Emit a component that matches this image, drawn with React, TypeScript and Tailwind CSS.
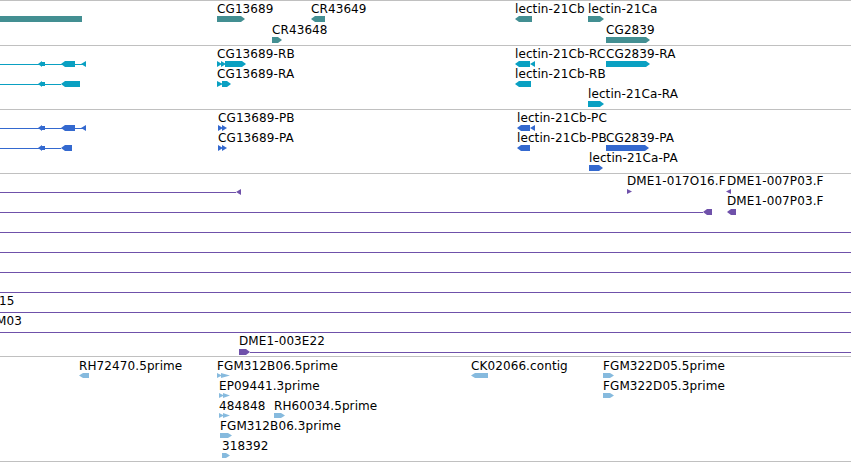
import React from 'react';

type Tip = 'l' | 'r' | 'none';

interface BarProps {
  x1: number;
  x2: number;
  y: number;
  h?: number;
  tip?: Tip;
}

// solid feature block, optionally pointed at one end
const Bar: React.FC<BarProps> = ({ x1, x2, y, h = 6, tip = 'none' }) => {
  const t = Math.min(4, x2 - x1);
  let pts = '';
  if (tip === 'r') pts = `${x1},${y} ${x2 - t},${y} ${x2},${y + h / 2} ${x2 - t},${y + h} ${x1},${y + h}`;
  else if (tip === 'l') pts = `${x1},${y + h / 2} ${x1 + t},${y} ${x2},${y} ${x2},${y + h} ${x1 + t},${y + h}`;
  else pts = `${x1},${y} ${x2},${y} ${x2},${y + h} ${x1},${y + h}`;
  return <polygon points={pts} />;
};

const Tri: React.FC<{ x1: number; x2: number; y: number; h?: number; dir: 'l' | 'r' }> = ({ x1, x2, y, h = 6, dir }) => {
  const pts =
    dir === 'l'
      ? `${x1},${y + h / 2} ${x2},${y} ${x2},${y + h}`
      : `${x1},${y} ${x2},${y + h / 2} ${x1},${y + h}`;
  return <polygon points={pts} />;
};

// arrowhead with a short thinner tail, sitting on an intron line
const Head: React.FC<{ x: number; y: number }> = ({ x, y }) => (
  <>
    <polygon points={`${x},${y + 3} ${x + 4},${y} ${x + 4},${y + 6}`} />
    <rect x={x + 4} y={y + 1} width={3} height={4} />
  </>
);

// two small right chevrons (UTR)
const Chev: React.FC<{ x: number; y: number; w?: number; h?: number }> = ({ x, y, w = 9, h = 6 }) => (
  <>
    <polygon points={`${x},${y} ${x + 5},${y + h / 2} ${x},${y + h}`} />
    <polygon points={`${x + 4},${y} ${x + w},${y + h / 2} ${x + 4},${y + h}`} />
  </>
);

const Line: React.FC<{ x1: number; x2: number; y: number }> = ({ x1, x2, y }) => (
  <rect x={x1} y={y} width={x2 - x1} height={1} />
);

const Label: React.FC<{ x: number; y: number; text: string }> = ({ x, y, text }) => (
  <span
    className="absolute whitespace-nowrap text-[12px] leading-[14px] tracking-[0.1px] text-black font-['DejaVu_Sans',sans-serif]"
    style={{ left: x, top: y }}
  >
    {text}
  </span>
);

// height includes the 1px separator at the bottom
const Track: React.FC<{ height: number; children: React.ReactNode }> = ({ height, children }) => (
  <div className="relative w-full shrink-0 overflow-hidden border-b border-[#c0c0c0]" style={{ height }}>
    {children}
  </div>
);

const GeneTrack = () => (
  <Track height={45}>
    <svg className="absolute inset-0" width={851} height={44}>
      <g className="fill-[#438f92]">
        <Bar x1={0} x2={82} y={15} />
        <Bar x1={217} x2={245} y={15} tip="r" />
        <Bar x1={311} x2={325} y={15} tip="l" />
        <Bar x1={515} x2={532} y={15} tip="l" />
        <Bar x1={588} x2={604} y={15} tip="r" />
        <Bar x1={272} x2={282} y={36} tip="r" />
        <Bar x1={606} x2={650} y={36} tip="r" />
      </g>
    </svg>
    <Label x={217} y={1} text="CG13689" />
    <Label x={311} y={1} text="CR43649" />
    <Label x={515} y={1} text="lectin-21Cb" />
    <Label x={588} y={1} text="lectin-21Ca" />
    <Label x={272} y={22} text="CR43648" />
    <Label x={606} y={22} text="CG2839" />
  </Track>
);

const TranscriptTrack = () => (
  <Track height={64}>
    <svg className="absolute inset-0" width={851} height={63}>
      <g className="fill-[#0aa0c2]">
        <Line x1={0} x2={86} y={18} />
        <Head x={38} y={15} />
        <Bar x1={61} x2={75} y={15} tip="l" />
        <Tri x1={81} x2={86} y={15} dir="l" />
        <Chev x={217} y={15} />
        <Bar x1={225} x2={246} y={15} tip="r" />
        <Bar x1={515} x2={530} y={15} tip="l" />
        <Tri x1={530} x2={535} y={15} dir="l" />
        <Bar x1={606} x2={650} y={15} tip="r" />

        <Line x1={0} x2={61} y={38} />
        <Head x={38} y={35} />
        <Bar x1={61} x2={80} y={35} tip="l" />
        <Tri x1={217} x2={223} y={35} dir="r" />
        <Bar x1={222} x2={231} y={35} tip="r" />
        <Bar x1={515} x2={531} y={35} tip="l" />

        <Bar x1={588} x2={604} y={55} tip="r" />
      </g>
    </svg>
    <Label x={217} y={1} text="CG13689-RB" />
    <Label x={515} y={1} text="lectin-21Cb-RC" />
    <Label x={606} y={1} text="CG2839-RA" />
    <Label x={217} y={21} text="CG13689-RA" />
    <Label x={515} y={21} text="lectin-21Cb-RB" />
    <Label x={588} y={41} text="lectin-21Ca-RA" />
  </Track>
);

const ProteinTrack = () => (
  <Track height={64}>
    <svg className="absolute inset-0" width={851} height={63}>
      <g className="fill-[#3469cf]">
        <Line x1={0} x2={86} y={18} />
        <Head x={38} y={15} />
        <Bar x1={61} x2={75} y={15} tip="l" />
        <Tri x1={81} x2={86} y={15} dir="l" />
        <Chev x={218} y={15} />
        <Bar x1={517} x2={530} y={15} tip="l" />
        <Tri x1={530} x2={535} y={15} dir="l" />

        <Line x1={0} x2={61} y={38} />
        <Head x={38} y={35} />
        <Bar x1={61} x2={72} y={35} tip="l" />
        <Chev x={218} y={35} />
        <Bar x1={517} x2={530} y={35} tip="l" />
        <Bar x1={606} x2={649} y={35} tip="r" />

        <Bar x1={589} x2={603} y={55} tip="r" />
      </g>
    </svg>
    <Label x={218} y={1} text="CG13689-PB" />
    <Label x={517} y={1} text="lectin-21Cb-PC" />
    <Label x={218} y={21} text="CG13689-PA" />
    <Label x={517} y={21} text="lectin-21Cb-PB" />
    <Label x={606} y={21} text="CG2839-PA" />
    <Label x={589} y={41} text="lectin-21Ca-PA" />
  </Track>
);

const CloneTrack = () => {
  const fullRows = [58, 78, 98, 118, 138, 158];
  return (
    <Track height={183}>
      <svg className="absolute inset-0" width={851} height={182}>
        <g className="fill-[#6f51aa]">
          <Line x1={0} x2={236} y={18} />
          <Tri x1={236} x2={241} y={15} h={6} dir="l" />
          <Tri x1={627} x2={632} y={15} h={5} dir="r" />
          <Tri x1={726} x2={731} y={15} h={5} dir="l" />

          <Line x1={0} x2={703} y={38} />
          <Bar x1={703} x2={712} y={35} tip="l" />
          <Bar x1={727} x2={736} y={35} tip="l" />

          {fullRows.map((y) => (
            <Line key={y} x1={0} x2={851} y={y} />
          ))}

          <Bar x1={239} x2={250} y={175} tip="r" />
          <Line x1={250} x2={851} y={178} />
        </g>
      </svg>
      <Label x={627} y={0} text="DME1-017O16.F" />
      <Label x={727} y={0} text="DME1-007P03.F" />
      <Label x={727} y={20} text="DME1-007P03.F" />
      <Label x={-1} y={120} text="15" />
      <Label x={-4} y={140} text="M03" />
      <Label x={239} y={160} text="DME1-003E22" />
    </Track>
  );
};

const EstTrack = () => (
  <Track height={105}>
    <svg className="absolute inset-0" width={851} height={104}>
      <g className="fill-[#86bade]">
        <Bar x1={79} x2={89} y={16} h={5} tip="l" />
        <Chev x={217} y={16} w={13} h={5} />
        <Bar x1={471} x2={488} y={16} h={5} tip="l" />
        <Bar x1={603} x2={614} y={16} h={5} tip="r" />

        <Chev x={219} y={36} w={11} h={5} />
        <Bar x1={603} x2={614} y={36} h={5} tip="r" />

        <Chev x={219} y={56} w={11} h={5} />
        <Bar x1={274} x2={285} y={56} h={5} tip="r" />

        <Bar x1={220} x2={232} y={76} h={5} tip="r" />
        <Bar x1={222} x2={230} y={96} h={5} tip="r" />
      </g>
    </svg>
    <Label x={79} y={2} text="RH72470.5prime" />
    <Label x={217} y={2} text="FGM312B06.5prime" />
    <Label x={471} y={2} text="CK02066.contig" />
    <Label x={603} y={2} text="FGM322D05.5prime" />
    <Label x={219} y={22} text="EP09441.3prime" />
    <Label x={603} y={22} text="FGM322D05.3prime" />
    <Label x={219} y={42} text="484848" />
    <Label x={274} y={42} text="RH60034.5prime" />
    <Label x={220} y={62} text="FGM312B06.3prime" />
    <Label x={222} y={82} text="318392" />
  </Track>
);

export default function App() {
  return (
    <div className="flex h-[462px] w-[851px] flex-col overflow-hidden border-t border-[#c0c0c0] bg-white">
      <GeneTrack />
      <TranscriptTrack />
      <ProteinTrack />
      <CloneTrack />
      <EstTrack />
    </div>
  );
}
